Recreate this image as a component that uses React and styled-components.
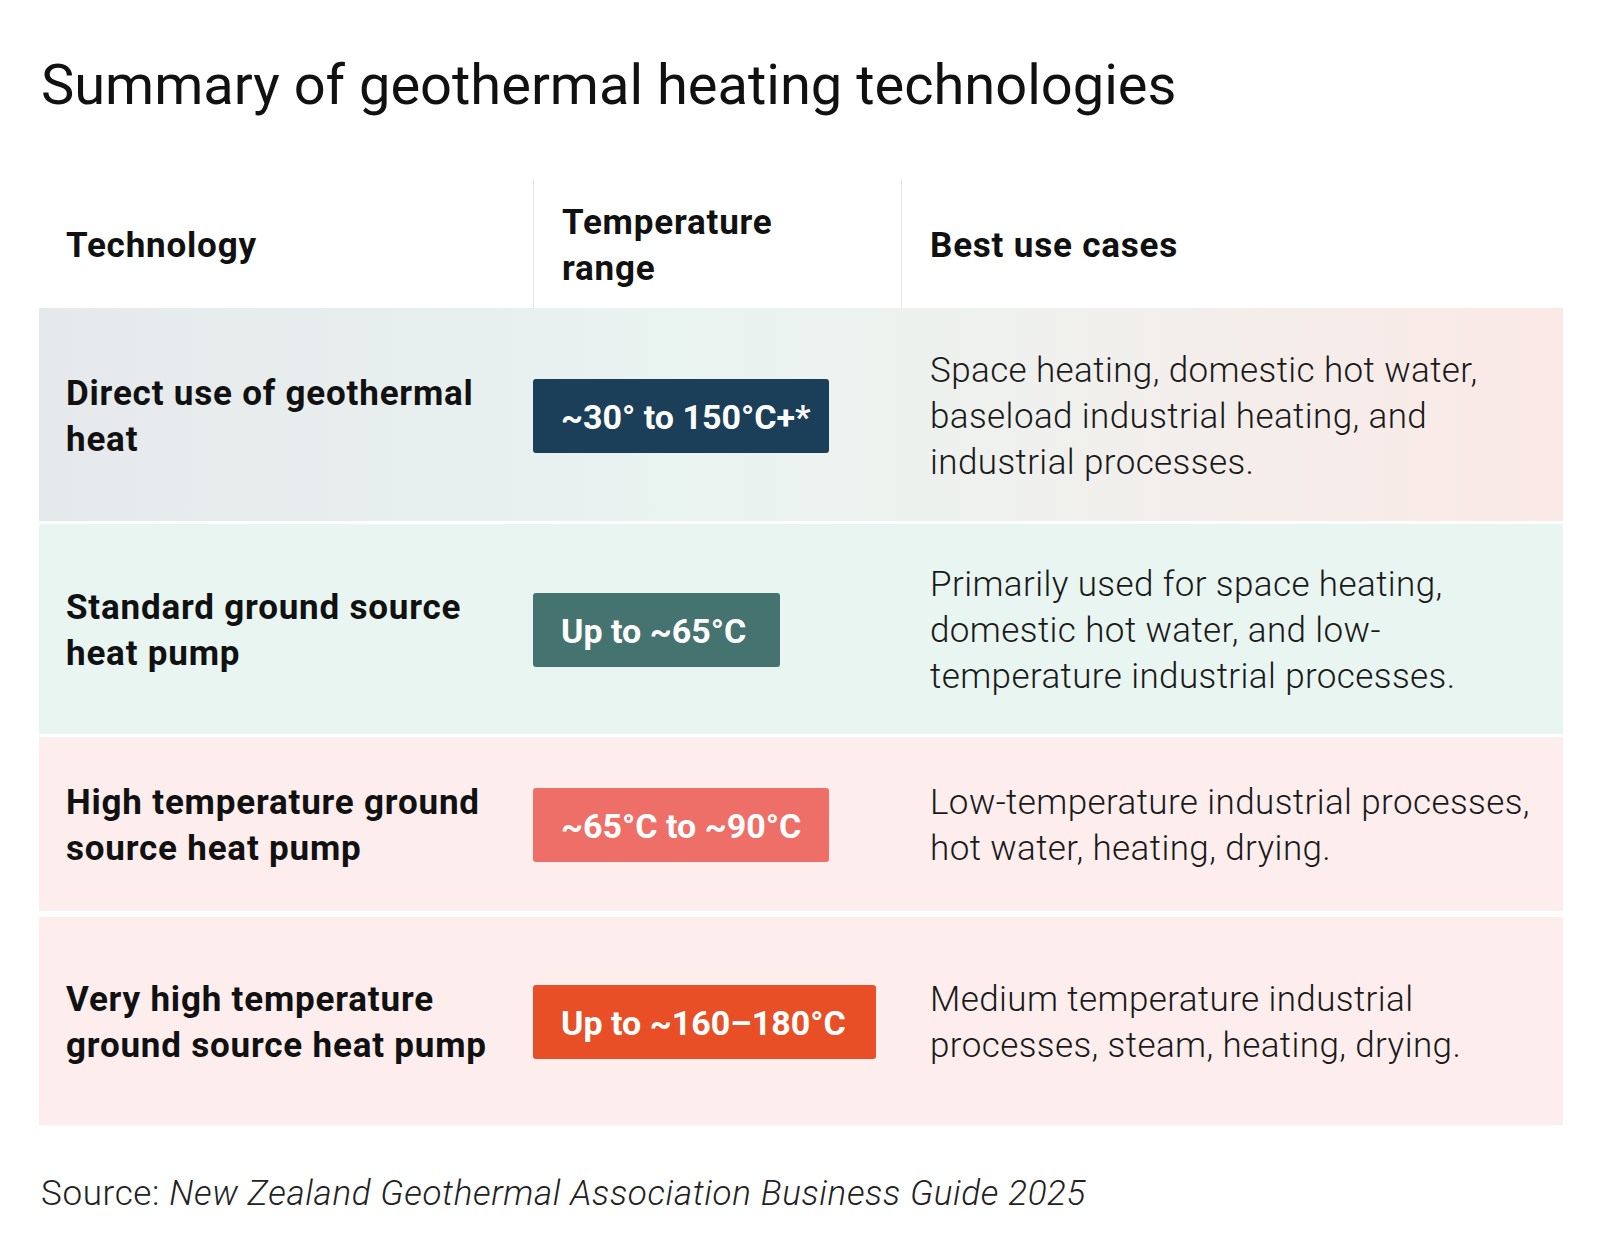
import React from 'react'
import styled, { createGlobalStyle } from 'styled-components'

const GlobalStyle = createGlobalStyle`
    body {
        margin: 0;
        background: #fff;
        font-family: Roboto, "Noto Sans", sans-serif;
        color: #111;
    }
`

const Page = styled.div`
    width: 1600px;
    padding: 52px 37px 0 39px;
    box-sizing: border-box;
`

const Title = styled.h1`
    margin: 0 0 0 2px;
    font-size: 56px;
    font-weight: 400;
    line-height: 66px;
`

const Table = styled.div`
    margin-top: 61px;
    display: flex;
    flex-direction: column;
`

const HeadRow = styled.div`
    display: grid;
    grid-template-columns: 494px 368px 1fr;
    height: 129px;
`

const HeadCell = styled.div`
    display: flex;
    align-items: center;
    padding: 4px 0 0 ${p => p.pad || 27}px;
    border-left: ${p => p.divider ? '1px solid #e6e6e6' : 'none'};
    font-size: 35px;
    font-weight: 700;
    line-height: 46px;
    letter-spacing: 0.8px;
`

const Row = styled.div`
    display: grid;
    grid-template-columns: 494px 368px 1fr;
    align-items: center;
    height: ${p => p.height}px;
    margin-top: ${p => p.gap}px;
    background: ${p => p.bg};
`

const Tech = styled.div`
    padding: 4px 30px 0 27px;
    font-size: 35px;
    font-weight: 700;
    line-height: 46px;
    letter-spacing: 0.8px;
`

const RangeCell = styled.div`
    display: flex;
    align-items: center;
    padding-top: 2px;
`

const Badge = styled.span`
    display: inline-block;
    box-sizing: border-box;
    width: ${p => p.width}px;
    height: 74px;
    line-height: 76px;
    padding-left: 28px;
    border-radius: 3px;
    background: ${p => p.color};
    color: #fff;
    font-size: 34px;
    font-weight: 700;
    white-space: nowrap;
`

const Uses = styled.div`
    padding: 4px 20px 0 29px;
    font-size: 35px;
    font-weight: 300;
    line-height: 46px;
    letter-spacing: 0.4px;
    color: #1a1a1a;
`

const Source = styled.p`
    margin: 46px 0 0 2px;
    font-size: 35px;
    font-weight: 300;
    line-height: 46px;
    letter-spacing: 0.65px;
    color: #222;
    & em {
        font-style: italic;
    }
`

const rows = [
    {
        tech: 'Direct use of geothermal heat',
        range: '~30° to 150°C+*',
        color: '#1b3f59',
        width: 296,
        uses: 'Space heating, domestic hot water, baseload industrial heating, and industrial processes.',
        bg: 'linear-gradient(90deg, #e6e9ec 0%, #e9f3f0 42%, #eef1ee 62%, #fbe9e6 100%)',
        height: 213,
        gap: 0,
    },
    {
        tech: 'Standard ground source heat pump',
        range: 'Up to ~65°C',
        color: '#457470',
        width: 247,
        uses: 'Primarily used for space heating, domestic hot water, and low-temperature industrial processes.',
        bg: '#e8f5f1',
        height: 210,
        gap: 3,
    },
    {
        tech: 'High temperature ground source heat pump',
        range: '~65°C to ~90°C',
        color: '#ee6f67',
        width: 296,
        uses: 'Low-temperature industrial processes, hot water, heating, drying.',
        bg: '#fdeeed',
        height: 174,
        gap: 3,
    },
    {
        tech: 'Very high temperature ground source heat pump',
        range: 'Up to ~160–180°C',
        color: '#e84f26',
        width: 343,
        uses: 'Medium temperature industrial processes, steam, heating, drying.',
        bg: '#fdeeed',
        height: 208,
        gap: 6,
    },
]

export default function App() {
    return (
        <Page>
            <GlobalStyle />
            <Title>Summary of geothermal heating technologies</Title>
            <Table>
                <HeadRow>
                    <HeadCell>Technology</HeadCell>
                    <HeadCell divider pad={28}>Temperature<br />range</HeadCell>
                    <HeadCell divider pad={28}>Best use cases</HeadCell>
                </HeadRow>
                {rows.map((r) => (
                    <Row key={r.tech} bg={r.bg} height={r.height} gap={r.gap}>
                        <Tech>{r.tech}</Tech>
                        <RangeCell>
                            <Badge color={r.color} width={r.width}>{r.range}</Badge>
                        </RangeCell>
                        <Uses>{r.uses}</Uses>
                    </Row>
                ))}
            </Table>
            <Source>Source: <em>New Zealand Geothermal Association Business Guide 2025</em></Source>
        </Page>
    )
}
